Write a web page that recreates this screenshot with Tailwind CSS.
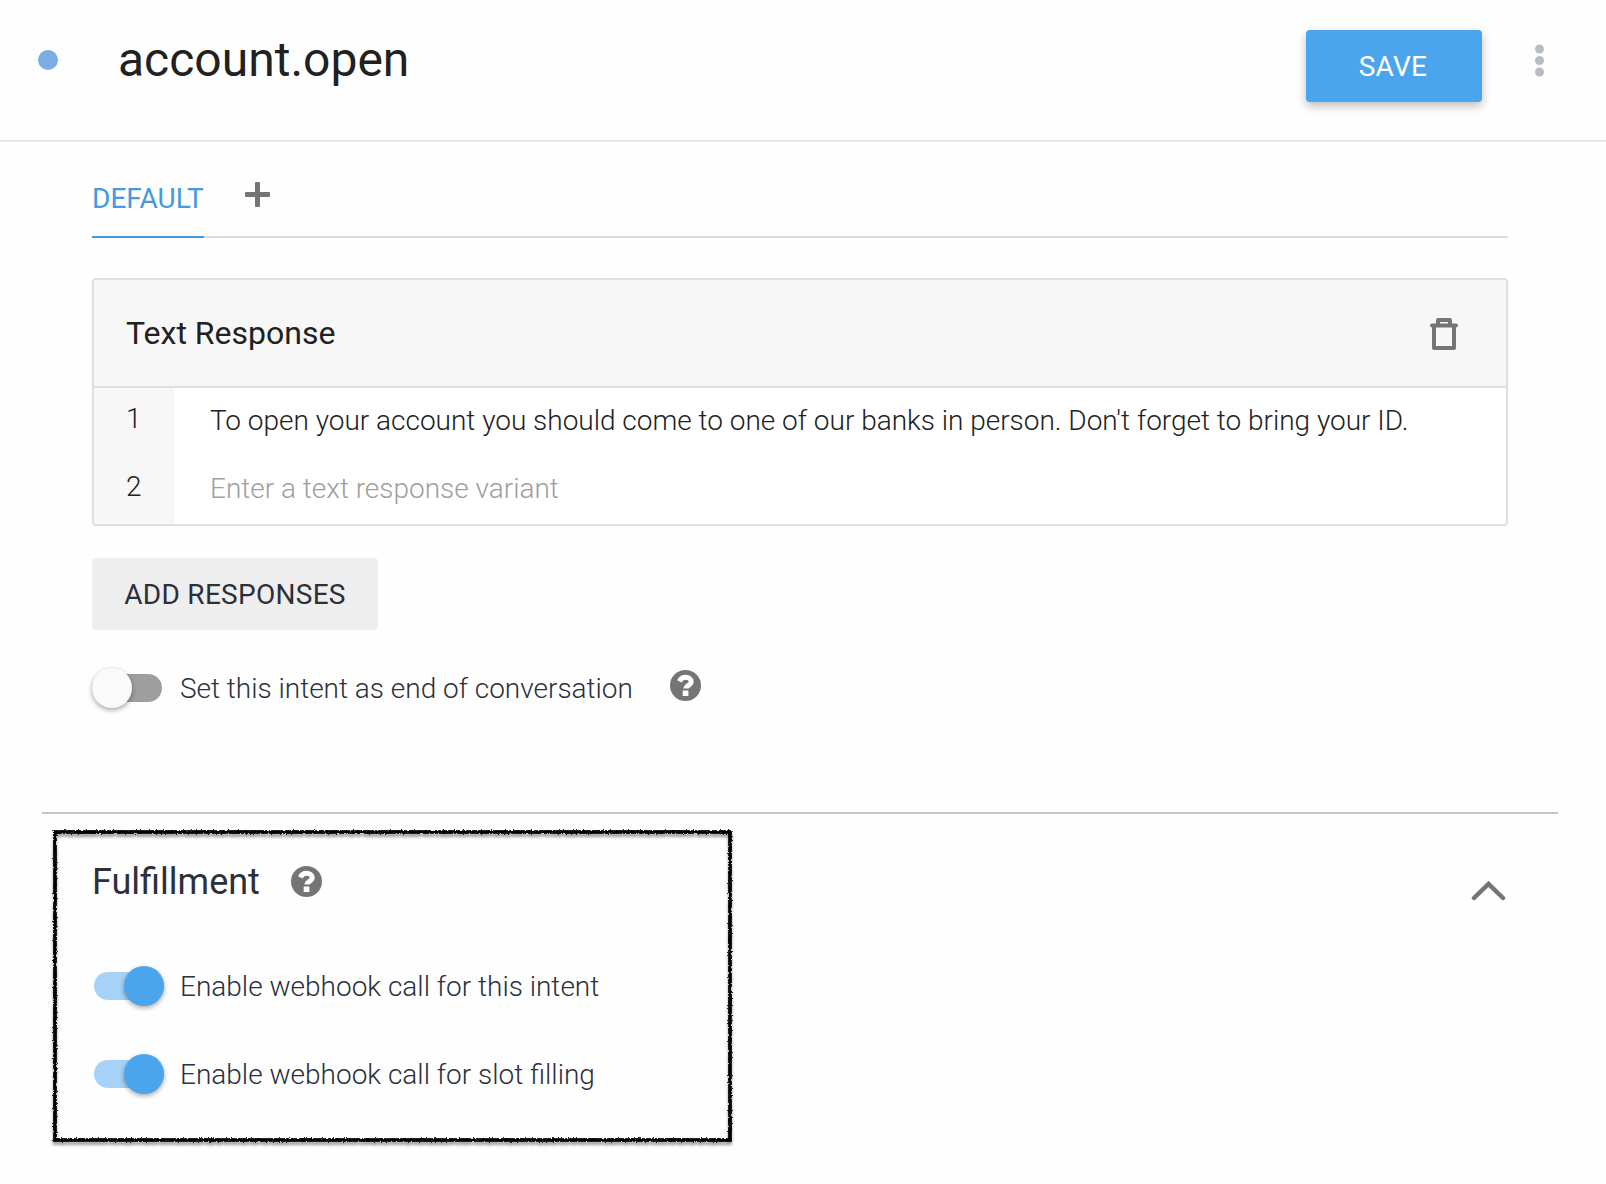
<!DOCTYPE html>
<html lang="en">
<head>
<meta charset="utf-8">
<title>account.open</title>
<script src="https://cdn.jsdelivr.net/npm/@tailwindcss/browser@4"></script>
</head>
<body class="bg-[#fefefe]">
<svg class="hidden">
  <symbol id="help" viewBox="0 0 31 31">
    <circle cx="15.500" cy="15.500" r="15.500" fill="#757575"/>
    <path d="M9.300 11.300C10.700 8.600 12.700 7.300 15.500 7.300c3.100 0 5.700 1.800 5.700 4.500 0 3.500-5.200 3.500-5.200 6.600" fill="none" stroke="#fff" stroke-width="5"/>
    <rect x="12.700" y="20.600" width="5.700" height="5.300" rx="0.500" fill="#fff"/>
  </symbol>
</svg>
<div class="w-[1606px] h-[1184px] overflow-hidden font-[Roboto,sans-serif] font-light text-[28px] leading-8 text-[#2b303b]">
  <header class="h-[142px] border-b-2 border-[#e5e5e5] flex items-start pl-[38px]">
    <span class="size-5 rounded-full bg-[#79ade3] mt-[50px]"></span>
    <h1 class="ml-[60px] mt-8 text-5xl leading-[56px] font-normal text-[#212121] flex-1">account.open</h1>
    <button class="mt-[30px] w-[176px] h-[72px] pt-0.5 pr-0.5 rounded bg-[#4aa5ed] text-white font-normal tracking-[0.28px] shadow-[0_4px_10px_rgba(0,0,0,0.26)]">SAVE</button>
    <svg class="ml-[52px] mr-[62px] mt-[44px]" width="10" height="33" viewBox="0 0 10 33" fill="#b8bcc6"><circle cx="5.500" cy="5" r="4.500"/><circle cx="5.500" cy="16.500" r="4.500"/><circle cx="5.500" cy="28" r="4.500"/></svg>
  </header>
  <main>
    <section class="pl-[92px] pr-[98px]">
      <nav class="h-24 flex items-stretch border-b-2 border-[#dbdbdb]">
        <div class="w-[112px] -mb-0.5 border-b-2 border-[#4499df] text-[#4499df] font-normal pt-[41px] whitespace-nowrap">DEFAULT</div>
        <svg class="ml-[41px] mt-10" width="25" height="25" viewBox="0 0 25 25" fill="#757575"><rect y="10" width="25" height="5" rx="1"/><rect x="10" width="5" height="25" rx="1"/></svg>
      </nav>
      <div class="mt-10 h-[248px] border-2 border-[#dfdfdf] rounded overflow-hidden bg-white">
        <div class="h-[108px] bg-[#f7f7f7] border-b-2 border-[#dfdfdf] flex items-center pl-8 pr-[48px]">
          <h2 class="text-[32px] leading-10 font-normal text-[#212121] flex-1">Text Response</h2>
          <svg width="28" height="33" viewBox="0 0 28 33" fill="none" stroke="#757575" stroke-width="4" stroke-linejoin="round" stroke-linecap="round"><path d="M4 8.500v22.500h20V8.500M2 8.500h24M8 8V3h12v5"/></svg>
        </div>
        <div class="grid grid-cols-[80px_1fr] grid-rows-2 h-[136px] tracking-[-0.013px] text-[#212121]">
          <div class="bg-[#f7f7f7] pl-8 pt-[15px]">1</div><div class="pl-9 pt-[17px] whitespace-nowrap">To open your account you should come to one of our banks in person. Don't forget to bring your ID.</div>
          <div class="bg-[#f7f7f7] pl-8 pt-[15px]">2</div><div class="pl-9 pt-[17px] text-[#9e9e9e]">Enter a text response variant</div>
        </div>
      </div>
      <button class="mt-8 w-[286px] h-[72px] pt-0.5 rounded bg-[#eeeeee] font-normal tracking-[0.28px] block">ADD RESPONSES</button>
      <div class="mt-[38px] h-10 flex items-center">
        <div class="w-[70px] h-7 rounded-full bg-[#9e9e9e] flex items-center"><span class="size-10 rounded-full bg-[#fafafa] shadow-[0_2px_5px_rgba(0,0,0,0.35)]"></span></div>
        <span class="ml-[18px] pt-0.5 w-[489.5px] tracking-[-0.013px] whitespace-nowrap">Set this intent as end of conversation</span>
        <svg class="-mt-[6px]" width="31" height="31"><use href="#help"/></svg>
      </div>
    </section>
    <hr class="mt-[104px] ml-[42px] mr-[48px] border-0 h-0.5 bg-[#c8c6c7]">
    <section class="ml-[53px] mr-[100px] mt-4 flex justify-between items-start">
      <div class="relative w-[679px] h-[312px] pl-[41px]">
        <svg class="absolute inset-0 overflow-visible" width="679" height="312" fill="none">
          <defs><filter id="chalk" filterUnits="userSpaceOnUse" x="-10" y="-10" width="700" height="335"><feTurbulence type="fractalNoise" baseFrequency="0.600" numOctaves="2" seed="4" result="n"/><feDisplacementMap in="SourceGraphic" in2="n" scale="3.200" xChannelSelector="R" yChannelSelector="G" result="r"/><feDropShadow in="r" dx="0" dy="3" stdDeviation="1.500" flood-color="#000" flood-opacity="0.400"/></filter></defs>
          <rect x="2" y="2" width="675" height="308" stroke="#000" stroke-width="3.700" filter="url(#chalk)"/>
        </svg>
        <div class="pt-[29px] flex items-start -ml-[2px]">
          <h2 class="w-[198.5px] pt-px text-4xl leading-[44px] font-normal">Fulfillment</h2>
          <svg class="mt-[7px]" width="31" height="31"><use href="#help"/></svg>
        </div>
        <div class="mt-[62px] h-10 flex items-center">
          <div class="w-[70px] h-7 rounded-full bg-[#a5d2f6] flex items-center justify-end"><span class="size-10 rounded-full bg-[#4aa5ed] shadow-[0_2px_5px_rgba(0,0,0,0.35)]"></span></div>
          <span class="ml-4 pt-0.5 whitespace-nowrap">Enable webhook call for this intent</span>
        </div>
        <div class="mt-12 h-10 flex items-center">
          <div class="w-[70px] h-7 rounded-full bg-[#a5d2f6] flex items-center justify-end"><span class="size-10 rounded-full bg-[#4aa5ed] shadow-[0_2px_5px_rgba(0,0,0,0.35)]"></span></div>
          <span class="ml-4 pt-0.5 whitespace-nowrap">Enable webhook call for slot filling</span>
        </div>
      </div>
      <svg class="mt-[50px]" width="35" height="21" viewBox="0 0 35 21" fill="none" stroke="#757575" stroke-width="4.500" stroke-linecap="round"><path d="M3 18 17.500 4 32 18"/></svg>
    </section>
  </main>
</div>
</body>
</html>
